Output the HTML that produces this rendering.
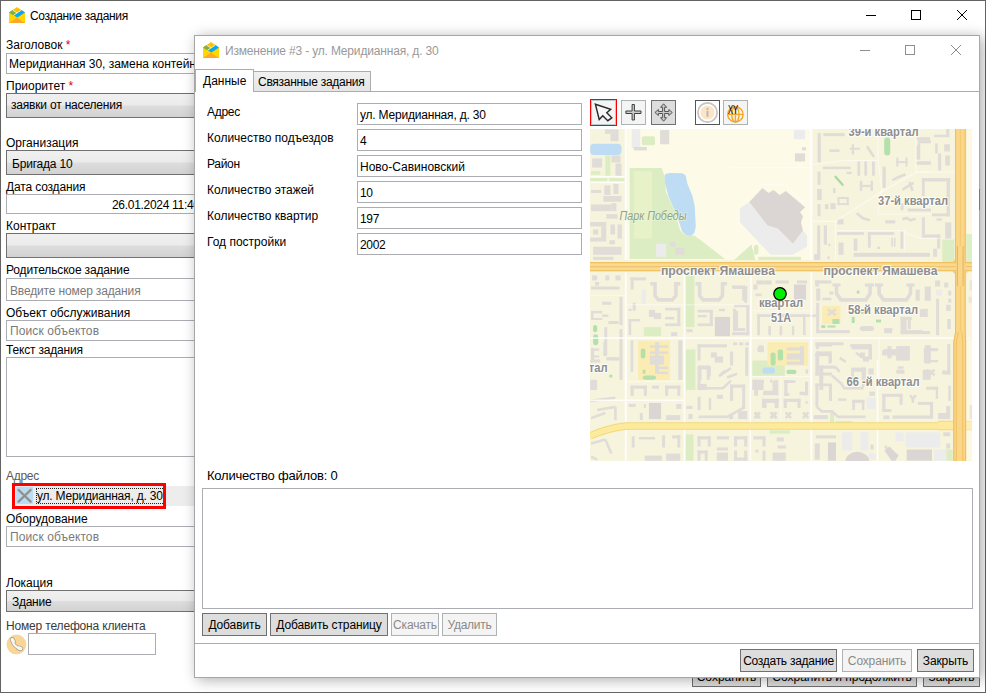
<!DOCTYPE html>
<html lang="ru">
<head>
<meta charset="utf-8">
<title>Создание задания</title>
<style>
*{box-sizing:border-box;margin:0;padding:0}
html,body{width:986px;height:693px;overflow:hidden;background:#fff}
body{font-family:"Liberation Sans",sans-serif;font-size:12px;color:#000;position:relative}
.a{position:absolute;white-space:nowrap}
.lbl{margin-top:1px;position:absolute;white-space:nowrap;font-size:12px;line-height:14px;color:#000}
.tb{position:absolute;border:1px solid #abadb3;background:#fff;font-size:12px;line-height:14px;white-space:nowrap;overflow:hidden;padding:3px 0 0 3px}
.ph{color:#7a7a7a}
.cb{position:absolute;border:1px solid #707070;background:linear-gradient(#f0f0f0 0%,#ebebeb 48%,#dddddd 52%,#d2d2d2 100%);font-size:12px;line-height:14px;white-space:nowrap;overflow:hidden;padding:4px 0 0 4px}
.btn{position:absolute;border:1px solid #707070;background:#dddddd;font-size:12px;line-height:14px;text-align:center;white-space:nowrap;padding-top:4px}
.btn.dis{border-color:#adb2b5;background:#f4f4f4;color:#8a8a8a}
.red{color:#e00000}
#outer{position:absolute;left:0;top:0;width:986px;height:693px;border:1px solid #646464;background:#fff}
#dlg{position:absolute;left:194px;top:35px;width:786px;height:643px;background:#fff;border:1px solid #a6a6a6;border-right-color:#a9a9a9;box-shadow:3px 2px 13px rgba(0,0,0,.32)}
</style>
</head>
<body>
<div id="outer">
  <!-- outer title bar -->
  <svg class="a" style="left:8px;top:6px" width="16" height="16" viewBox="0 0 16 16.4" preserveAspectRatio="none"><polygon points="0,5.6 8,0.2 16,5.6 16,16.4 0,16.4" fill="#ffd600"/><polygon points="0,5.6 8,0.2 16,5.6 8,11" fill="#ffc107"/><polygon points="0,5.6 3.6,3.2 8,6.1 4.4,8.6" fill="#7cb342"/><polygon points="12.4,3.2 16,5.6 8.4,10.8 4.9,8.4" fill="#03a9f4"/><path d="M3.6 3.2L8 6.1M12.4 3.2L4.4 8.6" stroke="#fffde7" stroke-width=".8" fill="none"/><polygon points="0,16.4 8,11 16,16.4" fill="#ffa726"/></svg>
  <svg class="a" style="left:859px;top:4px" width="115" height="22" viewBox="860 5 115 22" fill="none" stroke="#000" stroke-width="1"><path d="M866 15.5h10"/><rect x="911.5" y="10.5" width="9" height="9"/><path d="M957 10l10 10M967 10l-10 10"/></svg>

  <div class="a" id="otitle" style="left:29px;top:7px;font-size:12px;line-height:16px;letter-spacing:-0.33px">Создание задания</div>

  <div class="lbl" style="left:5px;top:36px">Заголовок <span class="red">*</span></div>
  <div class="tb" style="left:5px;top:52px;width:300px;height:21px;padding-left:2px;letter-spacing:-.04px">Меридианная 30, замена контейнера</div>
  <div class="lbl" style="left:5px;top:77px">Приоритет <span class="red">*</span></div>
  <div class="cb" style="left:5px;top:92px;width:300px;height:25px;letter-spacing:-0.19px">заявки от населения</div>

  <div class="lbl" style="left:5px;top:134px">Организация</div>
  <div class="cb" style="left:5px;top:149px;width:300px;height:25px;padding-left:5px;padding-top:6px;letter-spacing:-0.2px">Бригада 10</div>
  <div class="lbl" style="left:5px;top:178px;letter-spacing:-0.15px">Дата создания</div>
  <div class="tb" style="left:5px;top:193px;width:300px;height:20px;padding-left:105px;letter-spacing:-.3px">26.01.2024 11:40</div>
  <div class="lbl" style="left:5px;top:217px">Контракт</div>
  <div class="cb" style="left:5px;top:232px;width:300px;height:25px"></div>

  <div class="lbl" style="left:5px;top:261px;letter-spacing:-0.15px">Родительское задание</div>
  <div class="tb ph" style="left:5px;top:277px;width:300px;height:23px;padding-top:5px;letter-spacing:-0.15px">Введите номер задания</div>
  <div class="lbl" style="left:5px;top:304px">Объект обслуживания</div>
  <div class="tb ph" style="left:5px;top:319px;width:300px;height:21px;letter-spacing:.1px">Поиск объектов</div>
  <div class="lbl" style="left:5px;top:341px;letter-spacing:-0.18px">Текст задания</div>
  <div class="tb" style="left:5px;top:356px;width:300px;height:100px"></div>

  <div class="lbl" style="left:5px;top:467px;color:#5a5a5a;letter-spacing:-.3px">Адрес</div>
  <div class="a" style="left:13px;top:485px;width:300px;height:20px;background:#ededed"></div>
  <div class="a" style="left:15px;top:486px;width:17px;height:17px;background:#b9dcf5"></div>
  <svg class="a" style="left:15px;top:486px" width="17" height="17" viewBox="0 0 17 17"><path d="M2.6 3L14.6 14.6M14.6 3L2.6 14.6" stroke="#b0b0b0" stroke-width="2.8" stroke-linecap="round"/><path d="M2.6 3L14.6 14.6M14.6 3L2.6 14.6" stroke="#8c8c8c" stroke-width="1.6" stroke-linecap="round"/></svg>
  <div class="a" id="addrtxt" style="letter-spacing:-.2px;left:35px;top:487px;height:16px;border:1px dotted #222;padding:0 1px 0 0;line-height:14px;font-size:12px">ул. Меридианная, д. 30</div>
  <div class="a" style="left:11px;top:482px;width:154px;height:26px;border:3px solid #f00"></div>
  <svg class="a" style="left:5px;top:633px" width="21" height="21" viewBox="0 0 21 21"><circle cx="10.400" cy="10.400" r="9.900" fill="#f9d596"/><g fill="none" stroke-linecap="round" stroke-linejoin="round"><path d="M6.500 6.300Q6.900 11.500 13.500 14.600" stroke="#9a9a9a" stroke-width="3.600"/><path d="M6.200 5.600L7.300 7.400M12.500 13.900L14.700 14.700" stroke="#9a9a9a" stroke-width="4.800"/><path d="M6.500 6.300Q6.900 11.500 13.500 14.600" stroke="#fdf7ea" stroke-width="2.200"/><path d="M6.200 5.600L7.300 7.400M12.500 13.900L14.700 14.700" stroke="#fdf7ea" stroke-width="3.400"/></g></svg>
  <div class="btn" style="left:691px;top:663px;width:69px;height:23px;padding-top:5px">Сохранить</div>
  <div class="btn" style="left:766px;top:663px;width:150px;height:23px;padding-top:5px">Сохранить и продолжить</div>
  <div class="btn" style="left:922px;top:663px;width:57px;height:23px;padding-top:5px">Закрыть</div>
  <div class="lbl" style="left:5px;top:510px">Оборудование</div>
  <div class="tb ph" style="left:5px;top:525px;width:300px;height:21px;letter-spacing:.1px">Поиск объектов</div>

  <div class="lbl" style="left:5px;top:574px">Локация</div>
  <div class="cb" style="left:5px;top:589px;width:300px;height:22px;padding-top:4px;padding-left:5px;letter-spacing:-0.27px">Здание</div>
  <div class="lbl" style="left:5px;top:617px;color:#3a3a3a;letter-spacing:-0.17px">Номер телефона клиента</div>
  <div class="tb" style="left:27px;top:632px;width:128px;height:22px"></div>
</div>

<div id="dlg">
  <div class="a" style="left:784px;top:153px;width:1px;height:21px;background:#7a7a7a"></div>
  <svg class="a" style="left:8px;top:6px" width="16" height="16" viewBox="0 0 16 16.4" preserveAspectRatio="none"><polygon points="0,5.6 8,0.2 16,5.6 16,16.4 0,16.4" fill="#ffd600"/><polygon points="0,5.6 8,0.2 16,5.6 8,11" fill="#ffc107"/><polygon points="0,5.6 3.6,3.2 8,6.1 4.4,8.6" fill="#7cb342"/><polygon points="12.4,3.2 16,5.6 8.4,10.8 4.9,8.4" fill="#03a9f4"/><path d="M3.6 3.2L8 6.1M12.4 3.2L4.4 8.6" stroke="#fffde7" stroke-width=".8" fill="none"/><polygon points="0,16.4 8,11 16,16.4" fill="#ffa726"/></svg>
  <svg class="a" style="left:660px;top:4px" width="115" height="22" viewBox="855 40 115 22" fill="none" stroke="#8e8e8e" stroke-width="1"><path d="M860 50.5h10"/><rect x="905.5" y="45.5" width="9" height="9"/><path d="M951 45l10 10M961 45l-10 10"/></svg>
  <!-- toolbar -->
  <div class="a" style="left:395px;top:63px;width:27px;height:27px;border:1px solid #f00;background:#f4f4f4;box-shadow:inset 0 0 0 1px #b8ccd0"></div>
  <svg class="a" style="left:395px;top:63px" width="27" height="27" viewBox="590 99 27 27"><polygon points="595.4,104.2 610.7,109.2 606.8,112.7 611.8,117.8 607.8,120.7 602.8,115.7 599.2,119.5" fill="#f7f7f7" stroke="#2b2b2b" stroke-width="1.45" stroke-linejoin="miter"/></svg>
  <div class="a" style="left:426px;top:64px;width:25px;height:25px;border:1px solid #adb2b5;background:#f4f4f4"></div>
  <svg class="a" style="left:426px;top:64px" width="25" height="25" viewBox="621 100 25 25"><path d="M632.1 104.500h2.300v6.500h6.600v2.500h-6.600v6.500h-2.300v-6.500h-6.200v-2.500h6.200z" fill="#cdcdcd" stroke="#3f3f3f" stroke-width="1"/></svg>
  <div class="a" style="left:456px;top:64px;width:25px;height:25px;border:1px solid #707070;background:#dddddd"></div>
  <svg class="a" style="left:456px;top:64px" width="25" height="25" viewBox="651 100 25 25"><path d="M663.6 103.800l3 3.500h-2v4.200h4.200v-2l3.500 3-3.500 3v-2h-4.200v4.200h2l-3 3.500-3-3.500h2v-4.200h-4.200v2l-3.500-3 3.500-3v2h4.200v-4.200h-2z" fill="#c9c9c9" stroke="#555" stroke-width="1" stroke-linejoin="miter"/></svg>
  <div class="a" style="left:500px;top:64px;width:25px;height:25px;border:1px solid #555;background:#fff"></div>
  <svg class="a" style="left:500px;top:64px" width="25" height="25" viewBox="695 100 25 25"><circle cx="707.5" cy="112.500" r="9.600" fill="#fff" stroke="#c4c4c4" stroke-width="1.7"/><circle cx="707.5" cy="112.500" r="7.100" fill="#fde5c4"/><rect x="706.500" y="110.800" width="2" height="6" fill="#b4bac2"/><rect x="706.500" y="107.900" width="2" height="2" fill="#b4bac2"/></svg>
  <div class="a" style="left:528px;top:64px;width:25px;height:25px;border:1px solid #adb2b5;background:#f4f4f4"></div>
  <svg class="a" style="left:528px;top:64px" width="25" height="25" viewBox="723 100 25 25"><g fill="none" stroke="#f5a623" stroke-width="1.400"><circle cx="735.400" cy="114.400" r="7.700"/><ellipse cx="735.400" cy="114.400" rx="3.600" ry="7.700"/><path d="M735.400 106.700v15.400M727.700 114.400h15.400"/></g><text x="733.100" y="113.800" font-family="'Liberation Sans',sans-serif" font-size="13.500" fill="#000" text-anchor="middle" textLength="10.300" lengthAdjust="spacingAndGlyphs">XY</text></svg>
  <div class="a" id="dtitle" style="left:30px;top:7px;font-size:12px;line-height:16px;color:#999;letter-spacing:-0.17px">Изменение #3 - ул. Меридианная, д. 30</div>
  <!-- tabs -->
  <div class="a" style="left:0;top:55px;width:784px;height:1px;background:#acacac"></div>
  <div class="a" id="tab2" style="left:58px;top:35px;width:118px;height:21px;border:1px solid #acacac;background:linear-gradient(#f0f0f0,#e5e5e5);padding:3px 0 0 4px;line-height:14px;letter-spacing:-0.28px">Связанные задания</div>
  <div class="a" id="tab1" style="left:0px;top:33px;width:59px;height:23px;border:1px solid #acacac;border-bottom:none;background:#fff;padding:4px 0 0 7px;line-height:14px">Данные</div>

  <div class="lbl" style="left:12px;top:68px;letter-spacing:-.3px">Адрес</div>
  <div class="lbl" style="left:12px;top:94px">Количество подъездов</div>
  <div class="lbl" style="left:12px;top:120px;letter-spacing:-.3px">Район</div>
  <div class="lbl" style="left:12px;top:146px">Количество этажей</div>
  <div class="lbl" style="left:12px;top:172px">Количество квартир</div>
  <div class="lbl" style="left:12px;top:198px">Год постройки</div>
  <div class="tb" style="left:162px;top:67px;width:225px;height:22px;padding-top:4px;padding-left:2px;letter-spacing:-0.2px">ул. Меридианная, д. 30</div>
  <div class="tb" style="left:162px;top:93px;width:225px;height:22px;padding-top:4px;padding-left:2px;letter-spacing:0px">4</div>
  <div class="tb" style="left:162px;top:119px;width:225px;height:22px;padding-top:4px;padding-left:2px;letter-spacing:0px">Ново-Савиновский</div>
  <div class="tb" style="left:162px;top:145px;width:225px;height:22px;padding-top:4px;padding-left:2px;letter-spacing:-0.3px">10</div>
  <div class="tb" style="left:162px;top:171px;width:225px;height:22px;padding-top:4px;padding-left:2px;letter-spacing:-0.3px">197</div>
  <div class="tb" style="left:162px;top:197px;width:225px;height:22px;padding-top:4px;padding-left:2px;letter-spacing:-0.3px">2002</div>

<svg class="a" id="map" style="left:395px;top:93px" width="382" height="332" viewBox="590 129 382 332">
<defs><filter id="bl" x="-5%" y="-5%" width="110%" height="110%"><feGaussianBlur stdDeviation="0.55"/></filter></defs>
<g filter="url(#bl)"><rect x="570" y="109" width="422" height="372" fill="#f7f4dd"/>
<g fill="#fdfbe8"><rect x="627.2" y="129.1" width="184" height="130.8"/><rect x="967.1" y="129.1" width="4.9" height="137.9"/><rect x="967.1" y="340" width="4.9" height="120.7"/></g>
<g fill="#ddedc3"><rect x="591.1" y="171.2" width="9.1" height="3.5"/><rect x="590.1" y="178.1" width="17.2" height="3.3"/><rect x="609.3" y="178.1" width="15.3" height="3.3"/><rect x="605.3" y="155.4" width="5.1" height="20.3"/><rect x="641.8" y="136.2" width="13.2" height="9.1" rx="2"/><polygon points="629.6,168 661.7,168 664.5,175.7 666.1,191.9 674.2,210.2 680.3,230.5 686.4,236.2 694.5,235.5 725,258.9 629.6,258.9"/><polygon points="735.1,259.9 751.3,244.7 755.4,259.9"/><polygon points="734.1,259.9 751.3,244.7 754.3,259.9"/><rect x="758.4" y="256.8" width="42.6" height="3.1"/><rect x="753.9" y="244.7" width="4.5" height="10.1" rx="2"/><rect x="942.2" y="239.6" width="12.2" height="22.5"/><rect x="967.1" y="234.5" width="4.9" height="27.6"/><rect x="685.8" y="275.4" width="8.7" height="51.7"/><rect x="685.8" y="349.4" width="9.7" height="40.6"/><rect x="643.8" y="327.1" width="17.3" height="9.1"/><rect x="752.3" y="360.5" width="32.5" height="15.3"/><rect x="685.8" y="434.3" width="7.7" height="26.4"/><rect x="769.6" y="430.3" width="20.3" height="3.4"/><rect x="830" y="413" width="4" height="9.2"/><rect x="836" y="421.1" width="16.3" height="2.5"/><rect x="946.2" y="449.5" width="6.5" height="11.2"/></g>
<g fill="#e7f2c8"><rect x="633.7" y="171.2" width="18.2" height="67.4"/></g>
<g fill="#fbecb3"><rect x="638.1" y="340.7" width="31.7" height="39.1"/><rect x="767.5" y="342.3" width="40.6" height="23.3"/><rect x="822.3" y="305.8" width="18.2" height="18.2"/></g>
<g fill="#bedcf4"><rect x="590.1" y="143.7" width="31.4" height="11.3" rx="4"/><polygon points="664.5,175.7 666.1,173.7 670.2,172.9 682.4,173.3 685.6,175.3 687.4,183.8 692.5,196 694.7,206.1 695.8,226.4 694.5,232.5 691.5,235.8 686.4,235.8 682,230.9 676.3,214.2 668.6,196.4 665.3,184.2"/><rect x="762.5" y="367.6" width="12.5" height="6.1" rx="3"/></g>
<g fill="#ececec"><rect x="631.7" y="129.1" width="8.5" height="19.2"/><rect x="656" y="243.7" width="10.1" height="13.1"/><polygon points="740.1,208.2 749.3,201.7 767.5,225.4 777.7,228.4 792.9,243.7 803,230.5 807.1,235.5 807.1,246.7 792.9,254.8 770.6,254.8 740.1,222.4"/><rect x="793.9" y="130.1" width="11.2" height="9.1"/><rect x="641.8" y="289.6" width="4.1" height="14.2"/><rect x="866.5" y="397.8" width="9.1" height="11.2"/><rect x="842.1" y="432.3" width="10.2" height="18.2"/><rect x="860.4" y="432.3" width="8.1" height="18.2"/><rect x="868.5" y="453.6" width="7.1" height="6.1"/><rect x="895.5" y="432.3" width="8.1" height="9.1"/><rect x="905.7" y="432.3" width="34.5" height="15.2"/><rect x="934.1" y="449.5" width="12.1" height="11.2"/><rect x="936.1" y="289.6" width="6.1" height="6"/></g>
<g fill="#b4e0ac"><rect x="884.2" y="137.6" width="6" height="17.8" rx="3"/><rect x="593.1" y="325.1" width="4.1" height="7.1" rx="2"/><rect x="593.1" y="334.2" width="5.1" height="11.1" rx="3"/><rect x="609.3" y="374.7" width="3.1" height="2.7"/><rect x="640.8" y="348.4" width="4.6" height="10.1" rx="2"/><rect x="642.8" y="369.7" width="2.6" height="4"/><rect x="642.8" y="375.4" width="13.2" height="4.4" rx="3"/><rect x="770.6" y="352.4" width="5" height="13.2" rx="2"/><rect x="777.7" y="349.4" width="5.4" height="11.1" rx="2"/><rect x="786.4" y="369.7" width="10.1" height="4.4" rx="2"/><rect x="856.8" y="290.6" width="2.6" height="3"/><rect x="832.4" y="319" width="7.1" height="5"/><rect x="821.3" y="325.1" width="4" height="3"/><rect x="827.4" y="325.5" width="8.1" height="2"/><rect x="851.7" y="316.9" width="3" height="6.1"/><rect x="860.8" y="311.9" width="3.1" height="2"/><rect x="876" y="319.6" width="5.1" height="2.8"/></g>
<g fill="#e0dcd7"><rect x="604.9" y="129.5" width="13.6" height="4.4"/><rect x="610.4" y="133.9" width="8.1" height="7.3"/><rect x="611.4" y="155.4" width="9.1" height="7.1"/><rect x="592.1" y="158.5" width="10.1" height="9.1"/><rect x="615.4" y="163.5" width="6.1" height="12.2"/><rect x="604.3" y="185.4" width="6.1" height="9.6"/><rect x="613.4" y="183.8" width="5.1" height="10.2"/><rect x="591.1" y="189.9" width="10.1" height="3.1"/><rect x="603.3" y="196" width="18.2" height="5.7"/><rect x="591.1" y="204.5" width="20.3" height="6.7"/><rect x="611.4" y="203.1" width="5" height="8.1"/><rect x="606.3" y="214.2" width="11.2" height="4.5"/><rect x="590.1" y="222" width="16.2" height="4.4"/><rect x="601.2" y="226.4" width="5.1" height="15.2"/><rect x="590.1" y="237.6" width="11.1" height="4"/><rect x="593.1" y="229.5" width="5.1" height="5"/><rect x="610.4" y="224.4" width="4.6" height="10.1"/><rect x="617.5" y="224.4" width="4.4" height="14.2"/><rect x="609.3" y="240.2" width="5.7" height="4.1"/><rect x="593.1" y="246.7" width="28.4" height="8.1"/><rect x="593.1" y="256.8" width="20.3" height="3.1"/><rect x="660.1" y="130.1" width="9.1" height="14.2"/><rect x="633.7" y="146.9" width="13.2" height="3.5"/><rect x="670.2" y="241.6" width="5.1" height="5.1"/><rect x="675.3" y="247.7" width="9.1" height="7.1"/><rect x="794.9" y="153.4" width="10.2" height="8.1"/><rect x="802" y="147.3" width="4.1" height="3.1"/><rect x="817.6" y="133.1" width="3.3" height="29.4"/><rect x="823.3" y="133.1" width="21.3" height="3.1"/><rect x="829.4" y="149.3" width="10.1" height="2.7"/><rect x="851.7" y="144.3" width="2.4" height="10.1"/><rect x="849.7" y="147.7" width="10.1" height="2"/><rect x="896.3" y="157.5" width="2.1" height="9.1"/><rect x="905.5" y="157.5" width="2" height="9.1"/><rect x="896.3" y="161.1" width="11.2" height="2"/><rect x="822.9" y="166.6" width="27.8" height="2.6"/><rect x="857.4" y="161.5" width="2.8" height="14.2"/><rect x="864.3" y="161.5" width="2.8" height="14.2"/><rect x="872" y="161.5" width="2.8" height="14.2"/><rect x="859.8" y="180.8" width="2.5" height="10.1"/><rect x="870.6" y="180.8" width="2.4" height="10.1"/><rect x="859.8" y="184.8" width="13.2" height="2.3"/><rect x="882.5" y="166.6" width="3.3" height="21.3"/><rect x="817.6" y="171.7" width="2.9" height="13.1"/><rect x="817.2" y="188.9" width="4.5" height="11.2"/><rect x="817.6" y="204.1" width="2.9" height="12.2"/><rect x="837.5" y="197" width="11.2" height="2"/><rect x="837.5" y="203.1" width="11.2" height="2"/><rect x="837.5" y="197" width="2" height="8.1"/><rect x="846.6" y="197" width="2.1" height="8.1"/><rect x="824.9" y="204.1" width="3.5" height="5.1"/><rect x="830.4" y="203.1" width="5.1" height="6.1"/><rect x="833" y="187.9" width="2.5" height="5.1"/><rect x="846.6" y="171.7" width="5.1" height="2.4"/><rect x="916.6" y="137.2" width="13.4" height="3"/><rect x="916.6" y="145.3" width="3.1" height="14.2"/><rect x="916.6" y="161.5" width="13.4" height="3.1"/><rect x="885.2" y="220.3" width="10.1" height="3.1"/><rect x="837.5" y="219.3" width="6.1" height="5.1"/><rect x="837.1" y="232.1" width="26.8" height="2.8"/><rect x="867.9" y="232.1" width="26.4" height="2.8"/><rect x="867.9" y="232.1" width="2.9" height="15.6"/><rect x="900.4" y="230.5" width="3" height="18.2"/><rect x="891.3" y="237.6" width="1.6" height="9.1"/><rect x="893.9" y="237.6" width="1.6" height="9.1"/><rect x="853.7" y="238.6" width="3.7" height="12.2"/><rect x="817.2" y="225.4" width="3.1" height="29.4"/><rect x="823.7" y="225.4" width="3.3" height="19.3"/><rect x="838.5" y="242.6" width="5.1" height="12.2"/><rect x="853.7" y="252.8" width="76.3" height="4"/><rect x="877.1" y="246.7" width="3" height="2.4"/><rect x="828.4" y="243.7" width="2" height="2.6"/><rect x="827.4" y="256.4" width="2.4" height="2.5"/><rect x="917.8" y="140.2" width="13.2" height="3.1"/><rect x="917.8" y="143.3" width="2.5" height="16.2"/><rect x="917.8" y="161.5" width="13.2" height="3.1"/><rect x="946.2" y="129.1" width="3.1" height="8.1"/><rect x="934.1" y="134.7" width="15.2" height="2.5"/><rect x="935.1" y="143.3" width="2.6" height="10.1"/><rect x="938.1" y="153.4" width="3.1" height="17.2"/><rect x="944.2" y="144.3" width="5.7" height="7.1"/><rect x="945.2" y="155.4" width="4.7" height="10.2"/><rect x="921.9" y="178.1" width="28.4" height="3.3"/><rect x="921.9" y="178.1" width="2.8" height="17.9"/><rect x="946.6" y="178.1" width="3.3" height="38.2"/><rect x="932" y="213.4" width="17.9" height="2.9"/><rect x="907.7" y="208.6" width="23.3" height="2.8"/><rect x="900.6" y="203.1" width="3" height="7.1"/><rect x="921.9" y="217.3" width="3" height="17.2"/><rect x="921.9" y="234.5" width="18.3" height="3.1"/><rect x="937.1" y="234.5" width="3.1" height="14.2"/><rect x="945.2" y="222.4" width="6.1" height="16.2"/><rect x="933.1" y="248.7" width="4" height="8.1"/><rect x="936.5" y="218.3" width="5.3" height="2.4"/><rect x="592.1" y="275.4" width="5.1" height="5"/><rect x="605.3" y="275.4" width="4" height="5"/><rect x="615.4" y="275.4" width="5.1" height="5"/><rect x="595.1" y="282" width="4.1" height="3.5"/><rect x="591.1" y="286.5" width="28.4" height="3.1"/><rect x="619.5" y="296.7" width="3" height="28.4"/><rect x="602.2" y="301.7" width="9.2" height="3.1"/><rect x="591.1" y="310.9" width="11.1" height="2.4"/><rect x="591.1" y="310.9" width="2.4" height="9.1"/><rect x="591.1" y="318" width="11.1" height="2"/><rect x="602.2" y="314.5" width="6.1" height="2.4"/><rect x="608.3" y="321" width="10.2" height="3"/><rect x="604.3" y="327.1" width="3" height="28.4"/><rect x="591.1" y="348.4" width="8.1" height="2.4"/><rect x="591.1" y="348.4" width="2.4" height="9.1"/><rect x="591.1" y="355.5" width="8.1" height="2"/><rect x="590.1" y="359.5" width="10.1" height="3.1"/><rect x="619.5" y="329.1" width="3" height="50.7"/><rect x="609.3" y="357.5" width="10.2" height="3"/><rect x="590.1" y="379.8" width="7.1" height="10.2"/><rect x="630.6" y="277.4" width="15.3" height="3"/><rect x="630.6" y="277.4" width="3.1" height="12.2"/><rect x="628.6" y="308.8" width="3.1" height="2.1"/><rect x="632.7" y="302.7" width="3" height="8.2"/><rect x="648.9" y="309.8" width="6.1" height="7.1"/><rect x="654" y="312.9" width="7.1" height="6.1"/><rect x="665.1" y="307.8" width="15.2" height="2.6"/><rect x="677.3" y="307.8" width="3" height="18.3"/><rect x="665.1" y="323.4" width="15.2" height="2.7"/><rect x="665.1" y="316.9" width="9.1" height="2.5"/><rect x="628.6" y="319" width="11.2" height="2.4"/><rect x="628.6" y="319" width="2.6" height="16.2"/><rect x="671.2" y="332.2" width="6.1" height="4"/><rect x="697.6" y="309.8" width="15.2" height="2.7"/><rect x="709.7" y="309.8" width="3.1" height="16.3"/><rect x="697.6" y="323.4" width="15.2" height="2.7"/><rect x="697.6" y="314.9" width="9.1" height="2.4"/><rect x="733.1" y="286.5" width="14.2" height="2.4"/><rect x="744.2" y="286.5" width="3.1" height="16.2"/><rect x="734.1" y="304.8" width="15.2" height="2.4"/><rect x="746.3" y="304.8" width="3" height="30.4"/><rect x="732.1" y="332.2" width="17.2" height="3"/><rect x="735.1" y="310.9" width="3" height="18.2"/><rect x="718.9" y="308.8" width="6.1" height="2.5"/><rect x="686.4" y="329.1" width="6.1" height="3.1"/><rect x="753.4" y="284.5" width="4" height="5.1"/><rect x="763.5" y="280.4" width="8.1" height="4.1"/><rect x="755.4" y="293.6" width="6.1" height="2.6"/><rect x="757.4" y="314.5" width="2.4" height="20.7"/><rect x="757.4" y="314.5" width="60.9" height="2.4"/><rect x="768.6" y="326.1" width="2.4" height="9.1"/><rect x="779.7" y="326.1" width="2.5" height="9.1"/><rect x="655" y="342.3" width="4" height="31.4"/><rect x="649.9" y="345.3" width="18.3" height="2.5"/><rect x="649.9" y="351.4" width="18.3" height="2.5"/><rect x="649.9" y="355.5" width="14.2" height="9.1"/><rect x="655" y="366.6" width="13.2" height="2.5"/><rect x="658" y="371.7" width="10.2" height="2.4"/><rect x="630.6" y="340.3" width="2.7" height="31.4"/><rect x="678.3" y="340.3" width="4.1" height="39.5"/><rect x="697.6" y="344.3" width="29.4" height="3.1"/><rect x="697.6" y="344.3" width="3" height="16.2"/><rect x="710.8" y="352.4" width="6" height="5.1"/><rect x="714.8" y="356.5" width="8.1" height="6.1"/><rect x="730" y="351.4" width="3.1" height="14.2"/><rect x="733.1" y="342.3" width="4" height="3"/><rect x="739.2" y="342.3" width="4" height="3"/><rect x="745.2" y="342.3" width="3.7" height="3"/><rect x="745.2" y="347.4" width="3.1" height="28.4"/><rect x="698.6" y="365.6" width="11.1" height="3.1"/><rect x="698.6" y="365.6" width="3" height="14.2"/><rect x="706.7" y="365.6" width="3" height="14.2"/><rect x="697.6" y="383.9" width="9.1" height="6.1"/><rect x="757.4" y="347.4" width="6.1" height="4"/><rect x="753.4" y="379.8" width="10.1" height="10.2"/><rect x="814.2" y="254.1" width="6.1" height="6"/><rect x="732" y="285.5" width="13.2" height="3"/><rect x="742.2" y="285.5" width="3" height="15.2"/><rect x="756.4" y="280.4" width="7.1" height="4.1"/><rect x="775.6" y="280.4" width="13.2" height="3.1"/><rect x="796.9" y="280.4" width="10.2" height="3.1"/><rect x="733" y="308.8" width="3.1" height="22.3"/><rect x="733" y="328.1" width="12.2" height="3"/><rect x="757.4" y="314.5" width="2.4" height="20.7"/><rect x="757.4" y="314.5" width="48.7" height="2.4"/><rect x="803" y="314.5" width="2.5" height="20.7"/><rect x="768.5" y="326.1" width="2.5" height="9.1"/><rect x="779.7" y="326.1" width="2.4" height="9.1"/><rect x="791.9" y="326.1" width="2.4" height="9.1"/><rect x="800" y="346.3" width="4" height="18.3"/><rect x="786.8" y="347.4" width="17.2" height="3"/><rect x="786.8" y="353.4" width="17.2" height="6.1"/><rect x="786.8" y="361.6" width="17.2" height="3"/><rect x="758.4" y="345.3" width="5.1" height="6.1"/><rect x="752.3" y="379.8" width="10.2" height="10.2"/><rect x="815.2" y="280.4" width="4" height="6.1"/><rect x="815.2" y="280.4" width="16.2" height="3.1"/><rect x="816.2" y="288.5" width="4.1" height="12.2"/><rect x="822.3" y="297.7" width="9.1" height="2.6"/><rect x="829.4" y="291.6" width="4" height="3"/><rect x="832.4" y="283.5" width="8.1" height="3"/><rect x="864.9" y="283.5" width="9.1" height="3"/><rect x="875" y="283.5" width="8.1" height="3"/><rect x="906.5" y="283.5" width="8.1" height="3"/><rect x="915.6" y="289.6" width="4.1" height="11.1"/><rect x="924.7" y="286.5" width="6.1" height="14.2"/><rect x="816.2" y="302.7" width="3" height="30.5"/><rect x="816.2" y="330.1" width="33.5" height="3.1"/><rect x="859.8" y="326.1" width="14.2" height="5" rx="3"/><rect x="884.2" y="328.1" width="8.1" height="5.1"/><rect x="902.4" y="319" width="4.1" height="14.2"/><rect x="902.4" y="330.1" width="20.3" height="3.1"/><rect x="920.7" y="308.8" width="7.1" height="8.1"/><rect x="815.2" y="342.3" width="28.4" height="3"/><rect x="851.7" y="346.3" width="20.3" height="3.1"/><rect x="868.9" y="346.3" width="3.1" height="13.2"/><rect x="816.2" y="351.4" width="3" height="20.3"/><rect x="816.2" y="351.4" width="15.2" height="3.1"/><rect x="828.4" y="351.4" width="3" height="12.2"/><rect x="859.8" y="352.4" width="5.1" height="5.1"/><rect x="862.9" y="356.5" width="6" height="5.1"/><rect x="896.3" y="346.3" width="13.2" height="14.2"/><rect x="882.1" y="350.4" width="14.2" height="5.1"/><rect x="924.7" y="345.3" width="6.1" height="18.3"/><rect x="819.2" y="365.6" width="4.1" height="24.4"/><rect x="819.2" y="365.6" width="16.3" height="3.1"/><rect x="851.7" y="367.6" width="14.2" height="4.1"/><rect x="861.8" y="367.6" width="4.1" height="16.3"/><rect x="896.3" y="369.7" width="8.1" height="4"/><rect x="922.7" y="369.7" width="8.1" height="10.1"/><rect x="630.6" y="385.6" width="16.3" height="3.1"/><rect x="630.6" y="385.6" width="3.1" height="10.2"/><rect x="643.8" y="385.6" width="3.1" height="10.2"/><rect x="651.9" y="385.6" width="7.1" height="3.1"/><rect x="665.1" y="385.6" width="15.2" height="3.1"/><rect x="665.1" y="385.6" width="3.1" height="10.2"/><rect x="677.3" y="385.6" width="3" height="10.2"/><rect x="628.6" y="403.9" width="7.1" height="3"/><rect x="639.8" y="413" width="3" height="7.1"/><rect x="643.8" y="403.9" width="2.1" height="4.1"/><rect x="666.1" y="415.1" width="14.2" height="5"/><rect x="676.3" y="403.9" width="5" height="5.1"/><rect x="686.4" y="405.9" width="6.1" height="3.1"/><rect x="688.4" y="414" width="4.1" height="5.1"/><rect x="697.6" y="366.4" width="13.2" height="3"/><rect x="697.6" y="366.4" width="3" height="23.3"/><rect x="707.7" y="366.4" width="3.1" height="10.1"/><rect x="730" y="384.6" width="15.2" height="3.1"/><rect x="730" y="384.6" width="3.1" height="16.3"/><rect x="742.2" y="384.6" width="3" height="22.3"/><rect x="697.6" y="396.8" width="3" height="13.2"/><rect x="708.7" y="397.8" width="2.5" height="12.2"/><rect x="716.8" y="394.8" width="6.1" height="4"/><rect x="729" y="414" width="4.1" height="5.1"/><rect x="738.1" y="411" width="9.2" height="8.1"/><rect x="754.4" y="380.6" width="9.1" height="3"/><rect x="754.4" y="380.6" width="3" height="14.2"/><rect x="763.5" y="390.7" width="12.2" height="3.7"/><rect x="772.6" y="380.6" width="3.1" height="13.8"/><rect x="763.5" y="399.8" width="14.2" height="3.1"/><rect x="763.5" y="399.8" width="3" height="8.2"/><rect x="774.7" y="399.8" width="3" height="8.2"/><rect x="603.3" y="342" width="3" height="14.2"/><rect x="606.3" y="357.2" width="11.2" height="3.1"/><rect x="591.1" y="348.1" width="3" height="12.2"/><rect x="631.7" y="436.3" width="3" height="11.2"/><rect x="638.8" y="437" width="16.2" height="2.4"/><rect x="662.1" y="435.3" width="3" height="12.2"/><rect x="672.2" y="435.3" width="8.1" height="3.1"/><rect x="677.3" y="435.3" width="3" height="12.2"/><rect x="644.8" y="455.6" width="17.3" height="5.1"/><rect x="666.1" y="453.6" width="14.2" height="7.1"/><rect x="697.6" y="436.3" width="13.2" height="3.1"/><rect x="697.6" y="436.3" width="3" height="10.2"/><rect x="707.7" y="436.3" width="3.1" height="10.2"/><rect x="716.8" y="436.3" width="12.2" height="3.1"/><rect x="734.1" y="436.3" width="13.2" height="3.1"/><rect x="734.1" y="436.3" width="3" height="10.2"/><rect x="744.2" y="436.3" width="3.1" height="10.2"/><rect x="697.6" y="450.5" width="10.1" height="3.1"/><rect x="697.6" y="450.5" width="3" height="10.2"/><rect x="704.7" y="450.5" width="3" height="10.2"/><rect x="716.8" y="447.5" width="11.2" height="3"/><rect x="716.8" y="452.6" width="11.2" height="8.1"/><rect x="734.1" y="450.5" width="3" height="10.2"/><rect x="744.2" y="450.5" width="3.1" height="10.2"/><rect x="734.1" y="457.6" width="13.2" height="3.1"/><rect x="753.4" y="436.3" width="12.1" height="3.1"/><rect x="762.5" y="436.3" width="3" height="10.2"/><rect x="776.7" y="437.4" width="7.1" height="4"/><rect x="777.7" y="445.5" width="8.1" height="3"/><rect x="755.4" y="449.5" width="3" height="3.1"/><rect x="762.5" y="450.5" width="3" height="10.2"/><rect x="772.6" y="452.6" width="13.2" height="8.1"/><rect x="754.5" y="380.2" width="3.5" height="15.6"/><rect x="754.5" y="380.2" width="9.5" height="2.8"/><rect x="763" y="391.7" width="15.2" height="3.5"/><rect x="775.2" y="380.2" width="3" height="15"/><rect x="770.1" y="379.6" width="2.1" height="3"/><rect x="784.3" y="380.2" width="11.2" height="2.8"/><rect x="784.3" y="380.2" width="3.1" height="15.6"/><rect x="784.3" y="393.1" width="5.1" height="2.7"/><rect x="799.5" y="391.7" width="8.6" height="3.5"/><rect x="805" y="381.6" width="3.1" height="13.6"/><rect x="762" y="398.8" width="16.6" height="3.1"/><rect x="762" y="398.8" width="3.1" height="9.2"/><rect x="775.6" y="398.8" width="3" height="9.2"/><rect x="783.7" y="398.8" width="16.8" height="3.1"/><rect x="783.7" y="398.8" width="3.1" height="9.2"/><rect x="797.5" y="398.8" width="3" height="9.2"/><rect x="805.6" y="369.4" width="2.5" height="4.1"/><rect x="805.6" y="400.9" width="2" height="3"/><rect x="758" y="347.1" width="6" height="5.1"/><rect x="815.8" y="344.1" width="16.2" height="2.4"/><rect x="815.8" y="344.1" width="3" height="5"/><rect x="815.4" y="353.2" width="16.6" height="3"/><rect x="815.4" y="353.2" width="3" height="22.3"/><rect x="815.4" y="372.5" width="16.6" height="3"/><rect x="828.9" y="356.2" width="3.1" height="6.1"/><rect x="850.2" y="344.1" width="21.3" height="3"/><rect x="868.5" y="344.1" width="3" height="14.2"/><rect x="851.3" y="368.4" width="13.1" height="2.6"/><rect x="851.3" y="368.4" width="2.6" height="12.2"/><rect x="861.8" y="368.4" width="2.6" height="12.2"/><rect x="868.5" y="368.4" width="5.1" height="6.1"/><rect x="815.4" y="383.6" width="3" height="23.3"/><rect x="815.4" y="383.6" width="16.6" height="2.6"/><rect x="828.9" y="386.2" width="3.1" height="14.7"/><rect x="869.5" y="391.7" width="5.5" height="4.1"/><rect x="838.1" y="398.4" width="8.1" height="2.5"/><rect x="852.3" y="399.8" width="12.1" height="3.1"/><rect x="852.3" y="399.8" width="2.6" height="10.2"/><rect x="861.8" y="399.8" width="2.6" height="10.2"/><rect x="813.7" y="415.1" width="14.2" height="4"/><rect x="815.8" y="435.3" width="20.2" height="3.1"/><rect x="814.7" y="443.4" width="5.1" height="16.3"/><rect x="870.5" y="444.5" width="3.1" height="5"/><rect x="896.5" y="346.1" width="13.2" height="14.2"/><rect x="883.4" y="349.1" width="13.1" height="5.1"/><rect x="887.4" y="346.1" width="4.1" height="12.2"/><rect x="923.9" y="348.1" width="14.2" height="3.1"/><rect x="923.9" y="348.1" width="3.1" height="14.2"/><rect x="923.9" y="359.9" width="14.2" height="2.4"/><rect x="947.3" y="344.1" width="3" height="30.4"/><rect x="942.2" y="370.4" width="8.1" height="4.1"/><rect x="897.6" y="366.4" width="6" height="2.4"/><rect x="926" y="386.7" width="12.1" height="3"/><rect x="935.7" y="386.7" width="2.4" height="12.1"/><rect x="882.3" y="393.8" width="20.3" height="3"/><rect x="882.3" y="393.8" width="3.1" height="18.2"/><rect x="882.3" y="409" width="9.2" height="3"/><rect x="899.6" y="393.8" width="3" height="11.1"/><rect x="917.8" y="401.9" width="15.3" height="3"/><rect x="930" y="401.9" width="3.1" height="14.2"/><rect x="892.5" y="415.5" width="40.6" height="3.2"/><rect x="883.4" y="415.5" width="6" height="3.6"/><rect x="938.1" y="413" width="12.2" height="6.1"/><rect x="946.2" y="405.9" width="4.1" height="7.1"/><rect x="948.3" y="385.6" width="2.4" height="15.3"/><rect x="943.2" y="432.3" width="7.1" height="4"/><rect x="946.2" y="443.4" width="4.1" height="5.1"/><rect x="969.6" y="404.9" width="2.4" height="14.2"/><rect x="935.1" y="280.4" width="5.1" height="6.1"/><rect x="944.2" y="282.5" width="4.1" height="5"/><rect x="948.3" y="290.6" width="3" height="5"/><rect x="948.3" y="298.7" width="3" height="4"/><rect x="936.1" y="298.7" width="3" height="36.5"/><rect x="919.9" y="309.8" width="7.1" height="7.1"/><rect x="900.6" y="316.9" width="11.2" height="3.1"/><rect x="900.6" y="316.9" width="3" height="16.3"/><rect x="900.6" y="331.1" width="29.4" height="3.1"/><rect x="907.7" y="319" width="3" height="10.1"/><rect x="946.2" y="304.8" width="4.5" height="6.1"/><rect x="947.3" y="319" width="3.4" height="10.1"/><rect x="969.6" y="280.4" width="2.4" height="10.2"/><rect x="968.6" y="296.7" width="3.4" height="6"/></g>
<g fill="none" stroke="#e0dcd7" stroke-width="2.6" stroke-linejoin="miter"><polyline points="866.9,146.3 874,157"/><polyline stroke="#a9dca2" stroke-width="2.4" stroke-linecap="round" points="835.5,176.7 842.6,184.8"/><polyline points="892.3,180.2 898.4,177.3 905.5,174.3"/><polyline points="902.4,189.9 908.5,185.9 913.6,182.8"/><polyline points="909.5,181.8 912.6,190.9"/><polyline points="856.8,213.2 862.9,218.3 870,220.3"/><polyline points="902.4,219.3 906.5,217.9 910.5,220.3 915.6,218.7"/><polyline points="650.3,283.7 655,283.7 655,295.6 658.4,299.9 672.2,299.9 675.9,295.6 675.9,283.7 680.3,283.7" stroke-width="3.6"/><polyline points="695.5,283.7 699.6,283.7 699.6,295.6 703.1,299.9 718.9,299.9 722.5,295.6 722.5,283.7 727,283.7" stroke-width="3.6"/><polyline points="718.9,376.2 731,368.1"/><polyline points="836.5,284.5 836.5,293.6 841,299.9 865.9,299.9 870,293.6 870,284.5" stroke-width="3.6"/><polyline points="879.1,284.5 879.1,293.6 883.5,299.9 906.5,299.9 910.5,293.6 910.5,284.5" stroke-width="3.6"/><polyline points="827.8,309.2 835.9,315.3"/><polyline points="835.9,309.2 827.8,315.3"/><polyline points="719.9,375.5 725,370.8"/><polyline points="727,377.5 737.1,373.7"/><polyline points="703.7,388.3 722.9,388.3 731,380.6"/><polyline points="698.6,416.9 727,416.9 745.2,406.9"/><polyline points="754.8,412.4 759.4,418.1"/><polyline points="759.4,412.4 754.8,418.1"/><polyline points="771,412.4 776.7,418.1"/><polyline points="776.7,412.4 771,418.1"/><polyline points="590.1,400.9 615.4,397.8"/><polyline points="597.2,410 615.4,406.9"/><polyline points="615.4,406.9 615.4,420.1"/><polyline points="591.1,418.1 605.3,413"/><polyline points="591.1,443.4 605.3,439.4"/><polyline points="605.3,439.4 611.4,453.6"/><polyline points="591.1,456.6 597.2,459.7"/><polyline points="754.7,412.4 760,418.1"/><polyline points="760,412.4 754.7,418.1"/><polyline points="770.5,412.4 775.8,418.1"/><polyline points="775.8,412.4 770.5,418.1"/><polyline points="785.7,412.4 791,418.1"/><polyline points="791,412.4 785.7,418.1"/><polyline points="803,412.4 808.3,418.1"/><polyline points="808.3,412.4 803,418.1"/><polyline points="839.7,357.8 845.8,361.9"/><polyline points="855.9,352.8 862.8,357.8"/><polyline points="835.4,366.8 839.7,372"/><polyline points="832,375.5 841.1,383.6 844.2,388.3 862.4,388.3 864.4,380.6"/><polyline points="816.8,406.9 821.8,411.4 832,411.4 838.1,416.9 865.5,416.9"/><polyline points="885.1,445.9 890,453.2"/><polyline points="926.4,369.8 934.7,375.1"/><polyline points="934.7,369.8 926.4,375.1"/><polyline points="910.1,395.2 912.8,398.8 915.8,395.2"/><polyline points="912.8,398.8 912.8,402.9"/></g>
<g fill="#dbd6d3"><polygon points="749.3,202.1 762.5,187.9 768.5,193 773.6,189.9 779.7,195 785.8,190.9 805.1,207.2 800,212.2 803,216.3 801,222.4 803,230.5 792.9,243.7 777.7,228.4 767.5,225.4"/><rect x="714.8" y="316.9" width="15.2" height="19.3"/><rect x="793.9" y="284.5" width="12.2" height="15.2"/><rect x="648.9" y="402.9" width="12.2" height="16.2"/><rect x="827.9" y="442.4" width="8.1" height="18.3"/><ellipse cx="857.3" cy="461.7" rx="12" ry="10"/><rect x="906.7" y="449.5" width="25.3" height="11.2"/><polygon points="884.4,450.5 889.4,446.5 898.6,455.6 895.5,460.7 891.5,460.7"/></g>
<g fill="none" stroke="#ffffff" stroke-width="1.6" stroke-opacity=".8"><polyline points="625.8,129.1 625.8,259.9" stroke-width="2.2"/><polyline points="590.1,176.7 624.6,176.7"/><polyline points="590.1,182.4 624.6,182.4"/><polyline points="811.3,129.1 811.3,259.9" stroke-width="2.4"/><polyline points="730,167.6 810.1,167.6" stroke-width="1" stroke-opacity=".5"/><polyline points="760.4,184.8 784.8,184.8 801,200.1 810.1,200.1" stroke-width="1" stroke-opacity=".5"/><polyline points="835.5,221.3 881.1,191.9 916.6,172.1 930,172.1" stroke-width="1.3" stroke-opacity=".5"/><polyline points="812.8,221.3 835.5,221.3 835.5,259.9" stroke-width="1.2" stroke-opacity=".5"/><polyline points="812.8,164.6 843.6,160.5 878.1,160.5 878.1,129.1" stroke-width="1" stroke-opacity=".5"/><polyline points="878.1,160.5 882.1,191.9" stroke-width="1" stroke-opacity=".5"/><polyline points="835.5,230.5 904.4,230.5 904.4,250.8" stroke-width="1" stroke-opacity=".5"/><polyline points="881.1,191.9 878.1,214.2 930,214.2" stroke-width="1" stroke-opacity=".5"/><polyline points="915.8,129.1 915.8,172.1" stroke-width="1" stroke-opacity=".5"/><polyline points="915.8,172.1 954.4,172.1" stroke-width="1" stroke-opacity=".5"/><polyline points="899.6,230.5 921.9,238.6 940.2,238.6" stroke-width="1" stroke-opacity=".5"/><polyline points="967.1,175.7 972,175.7" stroke-width="1.4" stroke-opacity=".5"/><polyline points="625.8,271.9 625.8,390" stroke-width="2"/><polyline points="684.4,271.9 684.4,390" stroke-width="1.6"/><polyline points="750.9,271.9 750.9,390" stroke-width="1.6"/><polyline points="590.1,338.2 970.4,338.2" stroke-width="1.8"/><polyline points="590.1,295.6 624.6,295.6" stroke-width="1" stroke-opacity=".5"/><polyline points="627.2,304.8 684.4,304.8" stroke-width="1" stroke-opacity=".5"/><polyline points="685.8,304.8 750.9,304.8" stroke-width="1" stroke-opacity=".5"/><polyline points="811.3,271.9 811.3,390" stroke-width="2"/><polyline points="879.1,338.2 879.1,390" stroke-width="1.4" stroke-opacity=".5"/><polyline points="751.3,271.9 751.3,338.2" stroke-width="1" stroke-opacity=".5"/><polyline points="751.3,310.9 810.1,310.9" stroke-width="1" stroke-opacity=".5"/><polyline points="590.1,400.2 684.4,400.2" stroke-width="1.6"/><polyline points="625.8,340 625.8,460.7" stroke-width="2"/><polyline points="684.4,340 684.4,460.7" stroke-width="1.6"/><polyline points="750.3,340 750.3,460.7" stroke-width="1.6"/><polyline points="627.2,381.6 684.4,381.6" stroke-width="1" stroke-opacity=".5"/><polyline points="811.3,340 811.3,460.7" stroke-width="2"/><polyline points="877.6,359.7 877.6,460.7" stroke-width="1.6"/><polyline points="750.9,376.5 811.3,376.5" stroke-width="1" stroke-opacity=".5"/><polyline points="780.9,376.5 780.9,421.1" stroke-width="1" stroke-opacity=".5"/><polyline points="967.1,362.3 972,362.3" stroke-width="1.2" stroke-opacity=".5"/><polyline points="967.1,383.6 972,383.6" stroke-width="1.2" stroke-opacity=".5"/></g>
<!-- lower yellow road -->
<path d="M590 436 Q606 428.500 626 426 L940 426 L972 425.500" fill="none" stroke="#f1d87c" stroke-width="7.400"/>
<path d="M590 436 Q606 428.500 626 426 L940 426 L972 425.500" fill="none" stroke="#fdea9c" stroke-width="5.600"/>
<path d="M938 425.500 L972 425.500" fill="none" stroke="#f1d87c" stroke-width="9.500"/>
<path d="M938 425.500 L972 425.500" fill="none" stroke="#fdea9c" stroke-width="7.600"/>
<!-- main avenue -->
<rect x="590" y="262" width="382" height="9.300" fill="#efc162"/>
<rect x="590" y="263.300" width="382" height="6.800" fill="#fcd98b"/>
<rect x="590" y="266.300" width="382" height="0.900" fill="#e2bd70"/>
<!-- vertical avenue -->
<polygon points="955.200,129 965.600,129 965.600,332 966.100,342 966.100,461 953.300,461 953.300,342 955.200,332" fill="#fbd688"/>
<polyline points="955.600,129 955.600,332 953.800,342 953.800,461" fill="none" stroke="#ecbd5c" stroke-width="1"/>
<polyline points="965.200,129 965.200,332 965.600,342 965.600,461" fill="none" stroke="#ecbd5c" stroke-width="1"/>
<polyline points="960.400,129 960.400,246" fill="none" stroke="#efc76e" stroke-width=".9"/>
<polyline points="960.400,286 960.400,332" fill="none" stroke="#efc76e" stroke-width=".9"/>
<path d="M957.400 246V286M963.100 246V286" fill="none" stroke="#e3b55f" stroke-width="1"/>
<polyline points="958.400,332 956.300,342 956.300,461" fill="none" stroke="#eec162" stroke-width="1"/>
<polyline points="961.800,332 962.800,342 962.800,461" fill="none" stroke="#eec162" stroke-width="1"/>
<path d="M952 262.300h3.200v-3.200zM952 271h3.200v3.200zM968.800 262.300h-3.200v-3.200zM968.800 271h-3.200v3.200z" fill="#f6cd7b"/>
<rect x="955.100" y="263.200" width="1.200" height="6.900" fill="#fbd688"/>
<rect x="964.600" y="263.200" width="1.200" height="6.900" fill="#fbd688"/>
<rect x="966.200" y="129" width="5.800" height="133" fill="#fdf6d6" opacity=".4"/><rect x="966.200" y="271.300" width="5.800" height="190" fill="#fdf6d6" opacity=".4"/>
<rect x="966.200" y="234" width="5.800" height="28" fill="#ddefc6"/>
</g>
<g font-family="'Liberation Sans',sans-serif" font-weight="bold" font-size="12" fill="#8e8e8e" stroke="#ffffff" stroke-width="2.2" stroke-opacity=".8" paint-order="stroke" stroke-linejoin="round" text-anchor="middle">
<text x="883.5" y="136" textLength="70" lengthAdjust="spacingAndGlyphs">39-й квартал</text>
<text x="913" y="204.5" textLength="70" lengthAdjust="spacingAndGlyphs">37-й квартал</text>
<text x="718" y="274.5" textLength="114" lengthAdjust="spacingAndGlyphs">проспект Ямашева</text>
<text x="880.5" y="274.5" textLength="114" lengthAdjust="spacingAndGlyphs">проспект Ямашева</text>
<text x="781" y="307" textLength="44" lengthAdjust="spacingAndGlyphs">квартал</text>
<text x="781" y="321.5" textLength="20" lengthAdjust="spacingAndGlyphs">51А</text>
<text x="883" y="313.5" textLength="70" lengthAdjust="spacingAndGlyphs">58-й квартал</text>
<text x="883" y="385.5" textLength="73" lengthAdjust="spacingAndGlyphs">66 -й квартал</text>
<text x="585.5" y="372" textLength="44" lengthAdjust="spacingAndGlyphs">квартал</text>
</g>
<text x="653" y="220" font-family="'Liberation Sans',sans-serif" font-style="italic" font-size="12.5" fill="#8fa386" stroke="#eef6dc" stroke-width="1.6" stroke-opacity=".7" paint-order="stroke" text-anchor="middle" textLength="67" lengthAdjust="spacingAndGlyphs">Парк Победы</text>
<circle cx="780" cy="293.8" r="6.2" fill="#00ee00" stroke="#000" stroke-width="1.3"/>
</svg>
  <div class="lbl" style="left:12px;top:431px;font-size:13px;line-height:15px;letter-spacing:-.22px">Количество файлов: 0</div>
  <div class="a" style="left:7px;top:452px;width:771px;height:121px;border:1px solid #abadb3;background:#fff"></div>
  <div class="btn" style="left:7px;top:577px;width:65px;height:23px;letter-spacing:-.1px">Добавить</div>
  <div class="btn" style="left:75px;top:577px;width:118px;height:23px;letter-spacing:-.12px">Добавить страницу</div>
  <div class="btn dis" style="left:196px;top:577px;width:48px;height:23px;letter-spacing:-.15px">Скачать</div>
  <div class="btn dis" style="left:247px;top:577px;width:55px;height:23px;letter-spacing:-.25px">Удалить</div>
  <div class="a" style="left:0;top:607px;width:784px;height:1px;background:#acacac"></div>
  <div class="btn" style="left:545px;top:613px;width:97px;height:23px;letter-spacing:-.27px">Создать задание</div>
  <div class="btn dis" style="left:647px;top:613px;width:70px;height:23px;letter-spacing:-.15px">Сохранить</div>
  <div class="btn" style="left:722px;top:613px;width:57px;height:23px;letter-spacing:-.1px">Закрыть</div>
</div>
</body>
</html>
